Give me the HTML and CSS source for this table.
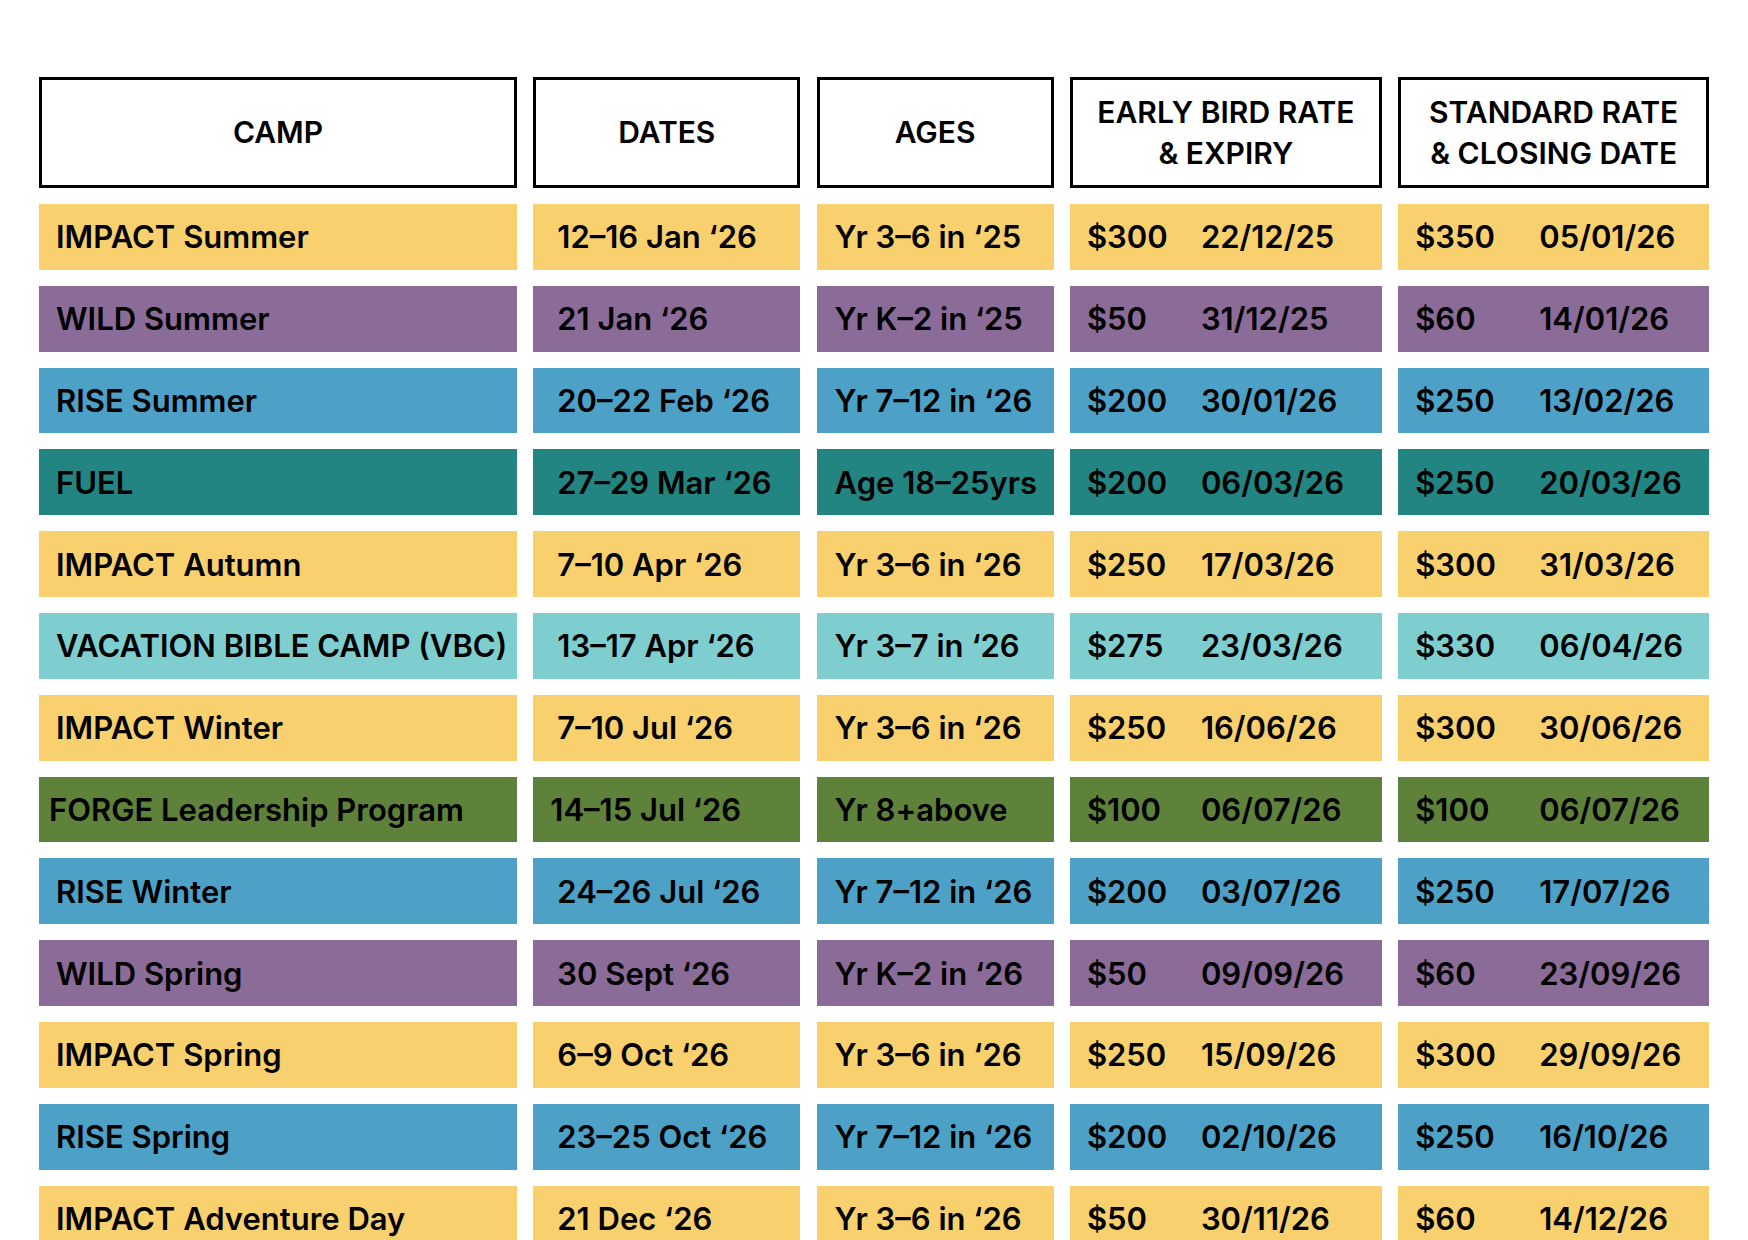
FILE: index.html
```html
<!DOCTYPE html>
<html lang="en">
<head>
<meta charset="utf-8">
<title>Camps 2026</title>
<link rel="stylesheet" href="styles.css">
</head>
<body>
<div class="table">
  <div class="head">CAMP</div>
  <div class="head">DATES</div>
  <div class="head">AGES</div>
  <div class="head">EARLY BIRD RATE<br>&amp; EXPIRY</div>
  <div class="head">STANDARD RATE<br>&amp; CLOSING DATE</div>

  <div class="cell camp yellow">IMPACT Summer</div>
  <div class="cell date yellow">12–16 Jan ‘26</div>
  <div class="cell age yellow">Yr 3–6 in ‘25</div>
  <div class="cell early yellow"><span class="price">$300</span><span>22/12/25</span></div>
  <div class="cell std yellow"><span class="price">$350</span><span>05/01/26</span></div>

  <div class="cell camp purple">WILD Summer</div>
  <div class="cell date purple">21 Jan ‘26</div>
  <div class="cell age purple">Yr K–2 in ‘25</div>
  <div class="cell early purple"><span class="price">$50</span><span>31/12/25</span></div>
  <div class="cell std purple"><span class="price">$60</span><span>14/01/26</span></div>

  <div class="cell camp blue">RISE Summer</div>
  <div class="cell date blue">20–22 Feb ‘26</div>
  <div class="cell age blue">Yr 7–12 in ‘26</div>
  <div class="cell early blue"><span class="price">$200</span><span>30/01/26</span></div>
  <div class="cell std blue"><span class="price">$250</span><span>13/02/26</span></div>

  <div class="cell camp teal">FUEL</div>
  <div class="cell date teal">27–29 Mar ‘26</div>
  <div class="cell age teal">Age 18–25yrs</div>
  <div class="cell early teal"><span class="price">$200</span><span>06/03/26</span></div>
  <div class="cell std teal"><span class="price">$250</span><span>20/03/26</span></div>

  <div class="cell camp yellow">IMPACT Autumn</div>
  <div class="cell date yellow">7–10 Apr ‘26</div>
  <div class="cell age yellow">Yr 3–6 in ‘26</div>
  <div class="cell early yellow"><span class="price">$250</span><span>17/03/26</span></div>
  <div class="cell std yellow"><span class="price">$300</span><span>31/03/26</span></div>

  <div class="cell camp aqua">VACATION BIBLE CAMP (VBC)</div>
  <div class="cell date aqua">13–17 Apr ‘26</div>
  <div class="cell age aqua">Yr 3–7 in ‘26</div>
  <div class="cell early aqua"><span class="price">$275</span><span>23/03/26</span></div>
  <div class="cell std aqua"><span class="price">$330</span><span>06/04/26</span></div>

  <div class="cell camp yellow">IMPACT Winter</div>
  <div class="cell date yellow">7–10 Jul ‘26</div>
  <div class="cell age yellow">Yr 3–6 in ‘26</div>
  <div class="cell early yellow"><span class="price">$250</span><span>16/06/26</span></div>
  <div class="cell std yellow"><span class="price">$300</span><span>30/06/26</span></div>

  <div class="cell camp green tight">FORGE Leadership Program</div>
  <div class="cell date green tight">14–15 Jul ‘26</div>
  <div class="cell age green">Yr 8+above</div>
  <div class="cell early green"><span class="price">$100</span><span>06/07/26</span></div>
  <div class="cell std green"><span class="price">$100</span><span>06/07/26</span></div>

  <div class="cell camp blue">RISE Winter</div>
  <div class="cell date blue">24–26 Jul ‘26</div>
  <div class="cell age blue">Yr 7–12 in ‘26</div>
  <div class="cell early blue"><span class="price">$200</span><span>03/07/26</span></div>
  <div class="cell std blue"><span class="price">$250</span><span>17/07/26</span></div>

  <div class="cell camp purple">WILD Spring</div>
  <div class="cell date purple">30 Sept ‘26</div>
  <div class="cell age purple">Yr K–2 in ‘26</div>
  <div class="cell early purple"><span class="price">$50</span><span>09/09/26</span></div>
  <div class="cell std purple"><span class="price">$60</span><span>23/09/26</span></div>

  <div class="cell camp yellow">IMPACT Spring</div>
  <div class="cell date yellow">6–9 Oct ‘26</div>
  <div class="cell age yellow">Yr 3–6 in ‘26</div>
  <div class="cell early yellow"><span class="price">$250</span><span>15/09/26</span></div>
  <div class="cell std yellow"><span class="price">$300</span><span>29/09/26</span></div>

  <div class="cell camp blue">RISE Spring</div>
  <div class="cell date blue">23–25 Oct ‘26</div>
  <div class="cell age blue">Yr 7–12 in ‘26</div>
  <div class="cell early blue"><span class="price">$200</span><span>02/10/26</span></div>
  <div class="cell std blue"><span class="price">$250</span><span>16/10/26</span></div>

  <div class="cell camp yellow">IMPACT Adventure Day</div>
  <div class="cell date yellow">21 Dec ‘26</div>
  <div class="cell age yellow">Yr 3–6 in ‘26</div>
  <div class="cell early yellow"><span class="price">$50</span><span>30/11/26</span></div>
  <div class="cell std yellow"><span class="price">$60</span><span>14/12/26</span></div>
</div>
</body>
</html>
```

FILE: styles.css
```css
html, body {
  margin: 0;
  padding: 0;
  background: #ffffff;
}

body {
  padding: 77px 0 0 39px;
  font-family: "Inter", "Liberation Sans", sans-serif;
  color: #000000;
}

.table {
  display: grid;
  grid-template-columns: 478px 267px 237px 312px 311px;
  grid-template-rows: 111px;
  grid-auto-rows: 65.8px;
  column-gap: 16.3px;
  row-gap: 16px;
}

.head {
  box-sizing: border-box;
  border: 3px solid #000000;
  display: flex;
  align-items: center;
  justify-content: center;
  text-align: center;
  font-size: 30px;
  font-weight: 600;
  line-height: 40.5px;
}

.cell {
  display: flex;
  align-items: center;
  padding-left: 17px;
  font-size: 31px;
  font-weight: 600;
  white-space: nowrap;
  line-height: 1;
}

.date {
  padding-left: 24px;
}

.age {
  padding-left: 18px;
}

.tight {
  padding-left: 10px;
}

.date.tight {
  padding-left: 17px;
}

.early .price {
  width: 114px;
}

.std .price {
  width: 124px;
}

.yellow { background: #f9d06e; }
.purple { background: #8b6b98; }
.blue   { background: #4ea1c6; }
.teal   { background: #238582; }
.aqua   { background: #7fcecf; }
.green  { background: #5e8239; }
```
